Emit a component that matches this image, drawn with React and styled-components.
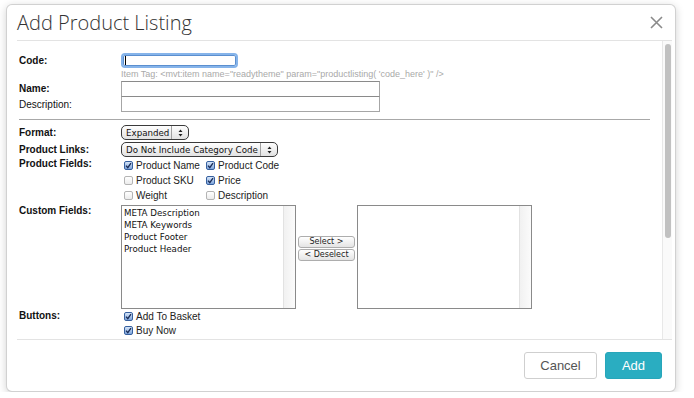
import React from 'react'
import styled, { createGlobalStyle } from 'styled-components'

const GlobalStyle = createGlobalStyle`
  body {
    margin: 0;
    background: #fff;
    font-family: "Liberation Sans", Arial, sans-serif;
  }
`

const Page = styled.div`
  padding: 4px 0 0 6px;
`

const Modal = styled.div`
  width: 670px;
  height: 388px;
  box-sizing: border-box;
  border: 1px solid rgba(0, 0, 0, 0.18);
  border-radius: 6px;
  box-shadow: 0 2px 8px rgba(0, 0, 0, 0.18);
  background: #fff;
  display: flex;
  flex-direction: column;
`

const Header = styled.div`
  height: 35px;
  flex: none;
  display: flex;
  align-items: center;
  justify-content: space-between;
  padding: 0 12px 0 10px;
`

const Title = styled.h4`
  margin: 0;
  font-family: "Open Sans", sans-serif;
  font-weight: 300;
  font-size: 20px;
  color: #333;
`

const Close = styled.button`
  border: 0;
  background: none;
  padding: 0;
  width: 13px;
  height: 13px;
  display: flex;
  cursor: pointer;
`

const Body = styled.div`
  height: 300px;
  flex: none;
  box-sizing: border-box;
  margin: 0 3px 0 10px;
  border-top: 1px solid #e3e3e3;
  border-bottom: 1px solid #e3e3e3;
  display: flex;
`

const Viewport = styled.div`
  flex: 1;
  overflow: hidden;
`

const Rail = styled.div`
  width: 10px;
  box-sizing: border-box;
  flex: none;
  background: #fafafa;
  border-left: 1px solid #e8e8e8;
  padding: 3px 1px 0 2px;
`

const Thumb = styled.div`
  height: 194px;
  border-radius: 4px;
  background: #c1c1c1;
`

const Form = styled.div`
  padding: 12px 0 0 2px;
`

const Row = styled.div`
  display: grid;
  grid-template-columns: 102px 1fr;
  align-items: ${p => (p.$top ? 'start' : 'center')};
  margin-top: ${p => p.$mt || 0}px;
`

const Label = styled.div`
  font-size: 10px;
  line-height: ${p => p.$lh || 12}px;
  font-weight: ${p => (p.$plain ? 'normal' : 'bold')};
  color: #111;
`

const FocusInput = styled.div`
  width: 117px;
  height: 15px;
  box-sizing: border-box;
  border: 2px solid #86b4ea;
  border-radius: 4px;
  box-shadow: inset 0 0 0 1px #5b8fcf;
  display: flex;
  align-items: center;
  padding-left: 2px;
`

const Caret = styled.span`
  width: 1px;
  height: 9px;
  background: #000;
`

const TextInput = styled.div`
  width: 259px;
  height: 16px;
  box-sizing: border-box;
  border: 1px solid #a6a6a6;
  border-top-color: #8a8a8a;
  background: #fff;
  margin-top: ${p => p.$mt || 0}px;
`

const Hint = styled.div`
  font-size: 9px;
  line-height: 13px;
  color: #a9a9a9;
  white-space: nowrap;
`

const Divider = styled.hr`
  margin: 7px 12px 0 0;
  border: 0;
  border-top: 1px solid #a8a8a8;
  height: 0;
`

const SelectBox = styled.div`
  width: ${p => p.$w}px;
  height: ${p => p.$h}px;
  box-sizing: border-box;
  display: flex;
  border: 1px solid #3a3a3a;
  border-radius: 5px;
  background: linear-gradient(#fefefe, #e2e2e2);
  font-family: "DejaVu Sans", sans-serif;
  font-size: 8.7px;
  color: #111;
`

const SelectText = styled.span`
  flex: 1;
  display: flex;
  align-items: center;
  padding-left: 4px;
  border-right: 1px solid #a0a0a0;
  white-space: nowrap;
`

const SelectArrows = styled.span`
  width: 16px;
  display: flex;
  align-items: center;
  justify-content: center;
`

const CheckGrid = styled.div`
  display: grid;
  grid-template-columns: 82px auto;
  grid-auto-rows: ${p => p.$rh || 15}px;
  align-items: center;
`

const CheckItem = styled.label`
  display: flex;
  align-items: center;
  gap: 3px;
  padding-left: 3px;
  font-size: 10px;
  color: #222;
  white-space: nowrap;
`

const Box = styled.span`
  width: 9px;
  height: 9px;
  box-sizing: border-box;
  border-radius: 2px;
  display: flex;
  align-items: center;
  justify-content: center;
  border: 1px solid ${p => (p.$on ? '#36609f' : '#b4b4b4')};
  background: ${p => (p.$on ? 'linear-gradient(#d6e5f8, #7ea5dc)' : 'linear-gradient(#fff, #ececec)')};
`

const Picker = styled.div`
  display: flex;
  gap: 2px;
`

const ListBox = styled.div`
  width: 175px;
  height: 104px;
  box-sizing: border-box;
  border: 1px solid #8a8a8a;
  display: flex;
  background: #fff;
`

const Options = styled.div`
  flex: 1;
  padding: 1px 2px;
  font-family: "DejaVu Sans", sans-serif;
  font-size: 8.7px;
  line-height: 12px;
  color: #111;
`

const Track = styled.div`
  width: 11px;
  border-left: 1px solid #e2e2e2;
  background: linear-gradient(to right, #f1f1f1, #fbfbfb);
`

const MoveCol = styled.div`
  width: 57px;
  display: flex;
  flex-direction: column;
  justify-content: center;
  gap: 1px;
  padding-bottom: 17px;
`

const MoveButton = styled.button`
  height: 12px;
  padding: 0;
  border: 1px solid #adadad;
  border-radius: 3px;
  background: linear-gradient(#fff, #e4e4e4);
  font-family: "DejaVu Sans", sans-serif;
  font-size: 8px;
  line-height: 10px;
  color: #222;
`

const Footer = styled.div`
  flex: 1;
  display: flex;
  justify-content: flex-end;
  align-items: flex-start;
  gap: 8px;
  padding: 12px 13px 0 0;
`

const Button = styled.button`
  height: 27px;
  width: ${p => p.$w}px;
  border-radius: 3px;
  font-family: "Liberation Sans", Arial, sans-serif;
  font-size: 13px;
  border: 1px solid ${p => (p.$primary ? '#27a6ba' : '#cfcfcf')};
  background: ${p => (p.$primary ? '#2aadc1' : '#fff')};
  color: ${p => (p.$primary ? '#fff' : '#555')};
`

const Check = ({ on, children }) => (
  <CheckItem>
    <Box $on={on}>
      {on && (
        <svg width="7" height="7" viewBox="0 0 7 7">
          <path d="M1 3.6 L2.8 5.6 L6 1.2" fill="none" stroke="#1b2d58" strokeWidth="1.4" />
        </svg>
      )}
    </Box>
    {children}
  </CheckItem>
)

const Select = ({ w, h, children }) => (
  <SelectBox $w={w} $h={h}>
    <SelectText>{children}</SelectText>
    <SelectArrows>
      <svg width="5" height="8" viewBox="0 0 5 8">
        <path d="M2.5 0.5 L4.5 3 L0.5 3 Z M2.5 7.5 L4.5 5 L0.5 5 Z" fill="#222" />
      </svg>
    </SelectArrows>
  </SelectBox>
)

const customFields = ['META Description', 'META Keywords', 'Product Footer', 'Product Header']

export default function App() {
  return (
    <>
      <GlobalStyle />
      <Page>
        <Modal>
          <Header>
            <Title>Add Product Listing</Title>
            <Close aria-label="Close">
              <svg width="13" height="13" viewBox="0 0 13 13">
                <path d="M1 1 L12 12 M12 1 L1 12" stroke="#8a8a8a" strokeWidth="1.6" />
              </svg>
            </Close>
          </Header>
          <Body>
            <Viewport>
              <Form>
                <Row>
                  <Label>Code:</Label>
                  <FocusInput><Caret /></FocusInput>
                </Row>
                <Row>
                  <span />
                  <Hint>Item Tag: &lt;mvt:item name="readytheme" param="productlisting( 'code_here' )" /&gt;</Hint>
                </Row>
                <Row>
                  <Label>Name:</Label>
                  <TextInput />
                </Row>
                <Row>
                  <Label $plain>Description:</Label>
                  <TextInput $mt={-1} />
                </Row>
                <Divider />
                <Row $mt={5}>
                  <Label>Format:</Label>
                  <Select w={68} h={15}>Expanded</Select>
                </Row>
                <Row $mt={2}>
                  <Label>Product Links:</Label>
                  <Select w={157} h={15}>Do Not Include Category Code</Select>
                </Row>
                <Row $mt={1} $top>
                  <Label $lh={12}>Product Fields:</Label>
                  <CheckGrid>
                    <Check on>Product Name</Check>
                    <Check on>Product Code</Check>
                    <Check>Product SKU</Check>
                    <Check on>Price</Check>
                    <Check>Weight</Check>
                    <Check>Description</Check>
                  </CheckGrid>
                </Row>
                <Row $mt={2} $top>
                  <Label>Custom Fields:</Label>
                  <Picker>
                    <ListBox>
                      <Options>
                        {customFields.map(f => <div key={f}>{f}</div>)}
                      </Options>
                      <Track />
                    </ListBox>
                    <MoveCol>
                      <MoveButton>Select &gt;</MoveButton>
                      <MoveButton>&lt; Deselect</MoveButton>
                    </MoveCol>
                    <ListBox>
                      <Options />
                      <Track />
                    </ListBox>
                  </Picker>
                </Row>
                <Row $top>
                  <Label $lh={14}>Buttons:</Label>
                  <CheckGrid $rh={14}>
                    <Check on>Add To Basket</Check>
                    <span />
                    <Check on>Buy Now</Check>
                  </CheckGrid>
                </Row>
              </Form>
            </Viewport>
            <Rail>
              <Thumb />
            </Rail>
          </Body>
          <Footer>
            <Button $w={73}>Cancel</Button>
            <Button $w={57} $primary>Add</Button>
          </Footer>
        </Modal>
      </Page>
    </>
  )
}
